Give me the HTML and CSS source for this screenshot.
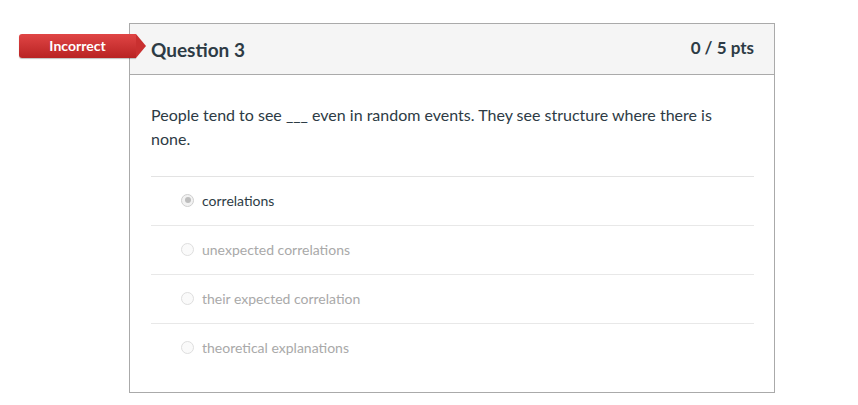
FILE: index.html
```html
<!DOCTYPE html>
<html>
<head>
<meta charset="utf-8">
<link rel="stylesheet" href="styles.css">
</head>
<body>
<div class="page">
  <div class="question">
    <div class="badge">Incorrect</div>
    <div class="header">
      <span class="title">Question 3</span>
      <span class="pts">0 / 5 pts</span>
    </div>
    <div class="body">
      <p class="text">People tend to see ___ even in random events. They see structure where there is none.</p>
      <div class="answers">
        <div class="answer selected"><span class="radio"></span><span class="label">correlations</span></div>
        <div class="answer"><span class="radio"></span><span class="label">unexpected correlations</span></div>
        <div class="answer"><span class="radio"></span><span class="label">their expected correlation</span></div>
        <div class="answer"><span class="radio"></span><span class="label">theoretical explanations</span></div>
      </div>
    </div>
  </div>
</div>
</body>
</html>
```
FILE: styles.css
```css
html, body {
  margin: 0;
  padding: 0;
  background: #fff;
  font-family: Lato, "Liberation Sans", sans-serif;
  color: #2d3b45;
}
.page {
  padding: 23px 0 0 129px;
}
.question {
  position: relative;
  width: 644px;
  border: 1px solid #aaaaaa;
  box-sizing: content-box;
}
.badge {
  position: absolute;
  left: -111px;
  top: 10px;
  width: 117px;
  height: 24px;
  line-height: 23px;
  box-sizing: border-box;
  text-align: center;
  color: #fff;
  font-weight: 700;
  font-size: 14px;
  background: linear-gradient(#e04545, #b92323);
  border-radius: 3px 0 0 3px;
  box-shadow: 0 1px 1px rgba(0,0,0,0.25);
}
.badge::after {
  content: "";
  position: absolute;
  right: -10px;
  top: 0;
  width: 0;
  height: 0;
  border-top: 12px solid transparent;
  border-bottom: 12px solid transparent;
  border-left: 10px solid #c93030;
}
.header {
  display: flex;
  justify-content: space-between;
  align-items: center;
  height: 50px;
  padding: 0 20px 0 21px;
  background: #f5f5f5;
  border-bottom: 1px solid #aaaaaa;
}
.title {
  font-size: 19px;
  font-weight: 700;
  padding-top: 1px;
}
.pts {
  font-size: 17px;
  font-weight: 700;
  color: #2d3b45;
  align-self: flex-start;
  padding-top: 13px;
}
.body {
  padding: 28px 20px 20px 21px;
}
.text {
  margin: 0 0 25px 0;
  font-size: 16px;
  line-height: 24px;
}
.answers {
  border-top: 1px solid #e3e3e3;
}
.answer {
  display: flex;
  align-items: center;
  height: 48px;
  padding-left: 30px;
  padding-bottom: 2px;
  box-sizing: border-box;
  font-size: 14px;
  color: #a9a9a9;
}
.answer + .answer {
  border-top: 1px solid #e8e8e8;
  height: 49px;
}
.answer.selected {
  color: #2d3b45;
}
.radio {
  width: 13px;
  height: 13px;
  border-radius: 50%;
  border: 1px solid #dedede;
  background: #fafafa;
  margin-right: 8px;
  box-sizing: border-box;
  position: relative;
}
.selected .radio {
  border-color: #cfcfcf;
  background: #f2f2f2;
}
.selected .radio::after {
  content: "";
  position: absolute;
  left: 2.5px;
  top: 2.5px;
  width: 6px;
  height: 6px;
  border-radius: 50%;
  background: #bdbdbd;
}
```
